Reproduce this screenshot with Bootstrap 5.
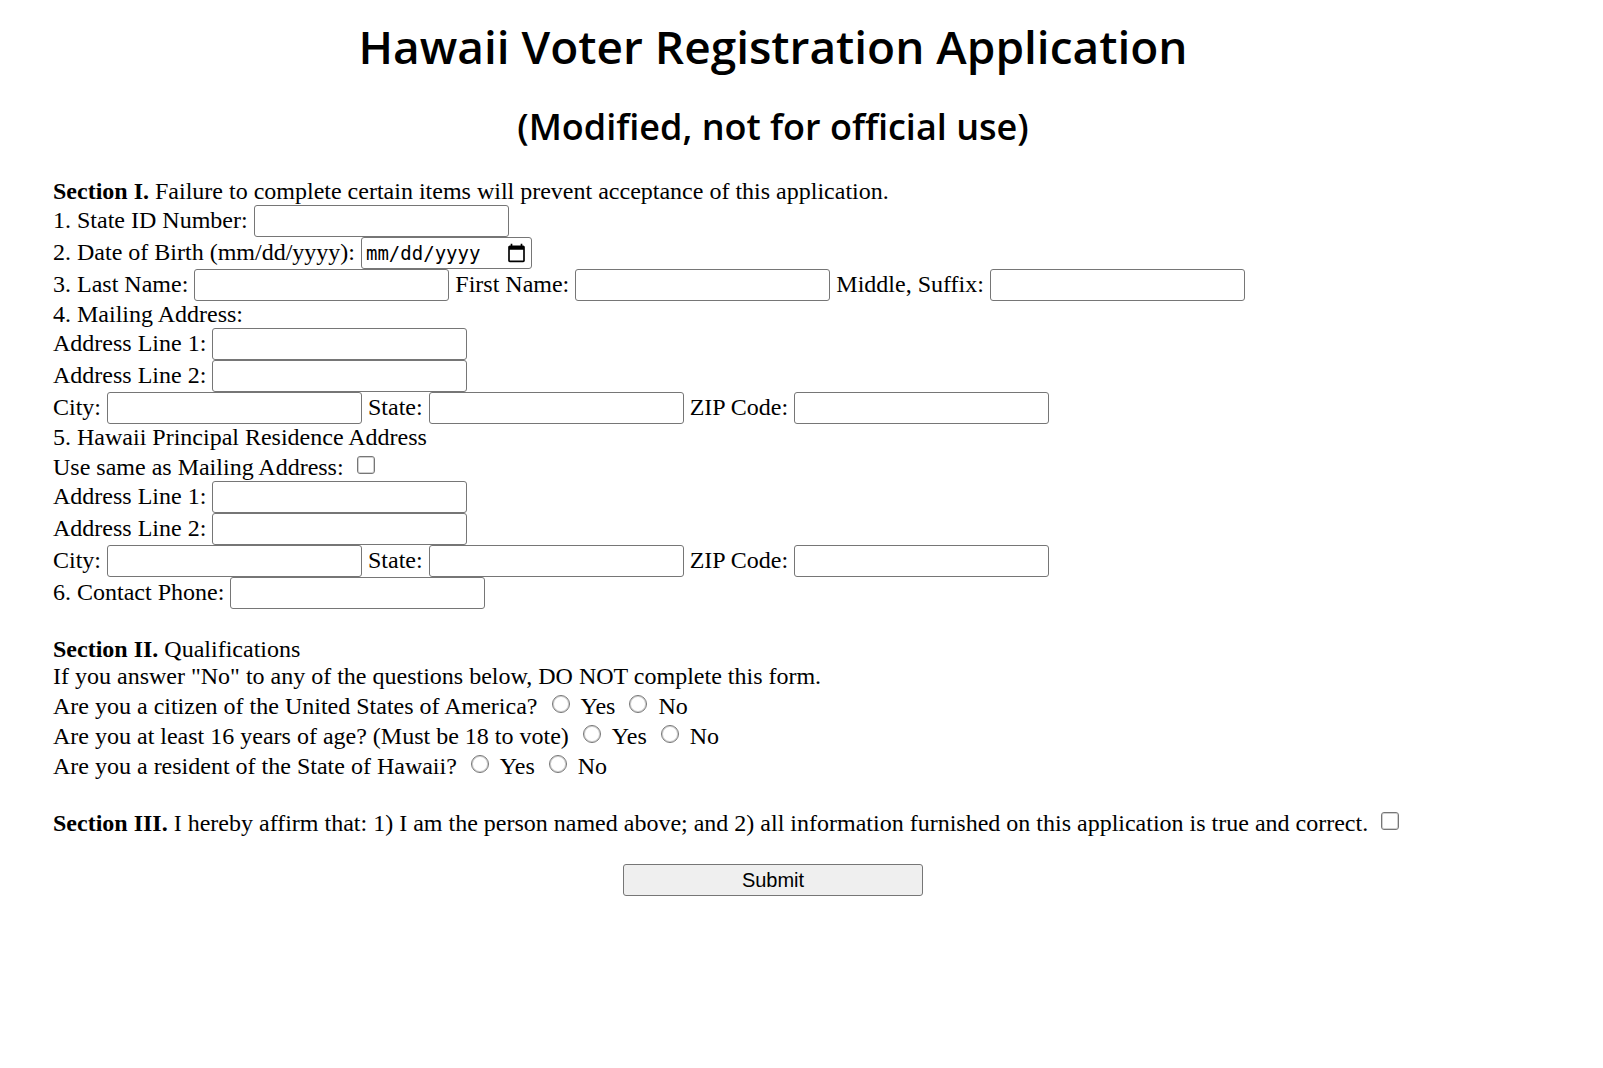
<!DOCTYPE html>
<html lang="en">
<head>
<meta charset="utf-8">
<meta name="viewport" content="width=device-width, initial-scale=1">
<title>Hawaii Voter Registration Application</title>
<link href="https://cdn.jsdelivr.net/npm/bootstrap@5.3.0/dist/css/bootstrap.min.css" rel="stylesheet">
<style>
  body { font-family: "Liberation Serif", "Times New Roman", serif; font-size: 24px; line-height: 27px; color: #000; background: #fff; }
  main { padding: 18px 110px 32px 53px; }
  h1, h2 { font-family: "Open Sans", sans-serif; font-weight: 600; }
  h1 { margin-bottom: 32px; font-size: 46px; line-height: 56px; }
  h2 { margin-bottom: 30px; font-size: 36px; line-height: 42px; }
  section { margin-bottom: 27px; }
  .line { display: flex; flex-wrap: wrap; align-items: baseline; column-gap: 6px; }
  .line-tick { padding-top: 3px; }
  .field { width: 255px; height: 32px; padding: 2px 4px; border: 1px solid #767676; border-radius: 3px; background: #fff; font-family: "Liberation Sans", Arial, sans-serif; font-size: 20px; line-height: 23px; color: #000; }
  .field-date { width: 171px; font-family: "DejaVu Sans Mono", monospace; font-size: 19px; }
  .field-date::-webkit-calendar-picker-indicator { width: 21px; height: 21px; margin-left: 0; padding: 0; }
  .tick { appearance: none; align-self: flex-end; flex: none; width: 18px; height: 18px; margin: 0 5px 7px 7px; border: 1px solid #767676; box-shadow: inset 0 0 0 1px #d0d0d0; border-radius: 3px; background: #fff; }
  .tick[type=radio] { margin-left: 8px; border-radius: 50%; }
  .tick:checked { background: #0075ff; box-shadow: inset 0 0 0 3px #fff; }
  .send { width: 300px; height: 32px; padding: 0; border: 1px solid #767676; border-radius: 3px; background: #efefef; font-family: "Liberation Sans", Arial, sans-serif; font-size: 20px; line-height: 23px; color: #000; }
</style>
</head>
<body>
<main>
  <h1 class="text-center">Hawaii Voter Registration Application</h1>
  <h2 class="text-center">(Modified, not for official use)</h2>
  <form>
    <section>
      <p class="m-0"><b>Section I.</b> Failure to complete certain items will prevent acceptance of this application.</p>
      <div class="line"><label for="sid">1. State ID Number:</label><input class="field" id="sid" type="text"></div>
      <div class="line"><label for="dob">2. Date of Birth (mm/dd/yyyy):</label><input class="field field-date" id="dob" type="date"></div>
      <div class="line">
        <label for="last">3. Last Name:</label><input class="field" id="last" type="text">
        <label for="first">First Name:</label><input class="field" id="first" type="text">
        <label for="middle">Middle, Suffix:</label><input class="field" id="middle" type="text">
      </div>
      <p class="m-0">4. Mailing Address:</p>
      <div class="line"><label for="m1">Address Line 1:</label><input class="field" id="m1" type="text"></div>
      <div class="line"><label for="m2">Address Line 2:</label><input class="field" id="m2" type="text"></div>
      <div class="line">
        <label for="mcity">City:</label><input class="field" id="mcity" type="text">
        <label for="mstate">State:</label><input class="field" id="mstate" type="text">
        <label for="mzip">ZIP Code:</label><input class="field" id="mzip" type="text">
      </div>
      <p class="m-0">5. Hawaii Principal Residence Address</p>
      <div class="line line-tick"><label for="same">Use same as Mailing Address:</label><input class="tick" id="same" type="checkbox"></div>
      <div class="line"><label for="r1">Address Line 1:</label><input class="field" id="r1" type="text"></div>
      <div class="line"><label for="r2">Address Line 2:</label><input class="field" id="r2" type="text"></div>
      <div class="line">
        <label for="rcity">City:</label><input class="field" id="rcity" type="text">
        <label for="rstate">State:</label><input class="field" id="rstate" type="text">
        <label for="rzip">ZIP Code:</label><input class="field" id="rzip" type="text">
      </div>
      <div class="line"><label for="phone">6. Contact Phone:</label><input class="field" id="phone" type="tel"></div>
    </section>
    <section>
      <p class="m-0"><b>Section II.</b> Qualifications</p>
      <p class="m-0">If you answer "No" to any of the questions below, DO NOT complete this form.</p>
      <div class="line line-tick" role="radiogroup" aria-labelledby="q1">
        <span id="q1">Are you a citizen of the United States of America?</span>
        <input class="tick" type="radio" name="citizen" id="cy"><label for="cy">Yes</label>
        <input class="tick" type="radio" name="citizen" id="cn"><label for="cn">No</label>
      </div>
      <div class="line line-tick" role="radiogroup" aria-labelledby="q2">
        <span id="q2">Are you at least 16 years of age? (Must be 18 to vote)</span>
        <input class="tick" type="radio" name="age" id="ay"><label for="ay">Yes</label>
        <input class="tick" type="radio" name="age" id="an"><label for="an">No</label>
      </div>
      <div class="line line-tick" role="radiogroup" aria-labelledby="q3">
        <span id="q3">Are you a resident of the State of Hawaii?</span>
        <input class="tick" type="radio" name="resident" id="ry"><label for="ry">Yes</label>
        <input class="tick" type="radio" name="resident" id="rn"><label for="rn">No</label>
      </div>
    </section>
    <section>
      <div class="line line-tick"><label for="affirm"><b>Section III.</b> I hereby affirm that: 1) I am the person named above; and 2) all information furnished on this application is true and correct.</label><input class="tick" id="affirm" type="checkbox"></div>
    </section>
    <div class="d-flex justify-content-center"><button class="send" type="submit">Submit</button></div>
  </form>
</main>
<script src="https://cdn.jsdelivr.net/npm/bootstrap@5.3.0/dist/js/bootstrap.bundle.min.js"></script>
</body>
</html>
